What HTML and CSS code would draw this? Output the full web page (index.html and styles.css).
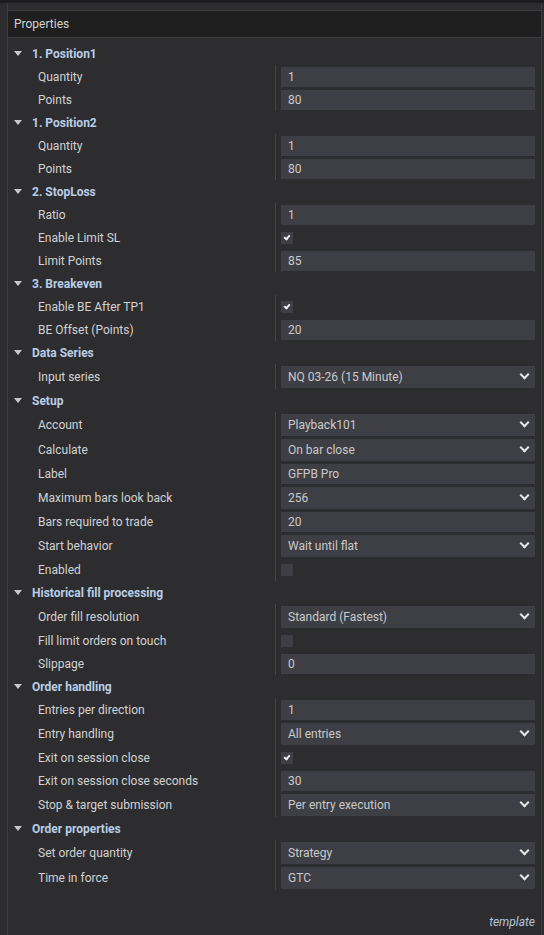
FILE: index.html
```html
<!DOCTYPE html>
<html>
<head>
  <title>Properties</title>
  <link rel="stylesheet" href="styles.css">
</head>
<body>
  <div class="panel">
    <div class="title">Properties</div>

    <div class="group">
      <div class="group-head"><span class="arrow"></span>1. Position1</div>
      <div class="row"><div class="label">Quantity</div><div class="value"><div class="input">1</div></div></div>
      <div class="row"><div class="label">Points</div><div class="value"><div class="input">80</div></div></div>
    </div>

    <div class="group">
      <div class="group-head"><span class="arrow"></span>1. Position2</div>
      <div class="row"><div class="label">Quantity</div><div class="value"><div class="input">1</div></div></div>
      <div class="row"><div class="label">Points</div><div class="value"><div class="input">80</div></div></div>
    </div>

    <div class="group">
      <div class="group-head"><span class="arrow"></span>2. StopLoss</div>
      <div class="row"><div class="label">Ratio</div><div class="value"><div class="input">1</div></div></div>
      <div class="row"><div class="label">Enable Limit SL</div><div class="value"><span class="check on"></span></div></div>
      <div class="row"><div class="label">Limit Points</div><div class="value"><div class="input">85</div></div></div>
    </div>

    <div class="group">
      <div class="group-head"><span class="arrow"></span>3. Breakeven</div>
      <div class="row"><div class="label">Enable BE After TP1</div><div class="value"><span class="check on"></span></div></div>
      <div class="row"><div class="label">BE Offset (Points)</div><div class="value"><div class="input">20</div></div></div>
    </div>

    <div class="group">
      <div class="group-head"><span class="arrow"></span>Data Series</div>
      <div class="row tall"><div class="label">Input series</div><div class="value"><div class="select">NQ 03-26 (15 Minute)<span class="chev"></span></div></div></div>
    </div>

    <div class="group">
      <div class="group-head"><span class="arrow"></span>Setup</div>
      <div class="row tall"><div class="label">Account</div><div class="value"><div class="select">Playback101<span class="chev"></span></div></div></div>
      <div class="row tall"><div class="label">Calculate</div><div class="value"><div class="select">On bar close<span class="chev"></span></div></div></div>
      <div class="row"><div class="label">Label</div><div class="value"><div class="input">GFPB Pro</div></div></div>
      <div class="row tall"><div class="label">Maximum bars look back</div><div class="value"><div class="select">256<span class="chev"></span></div></div></div>
      <div class="row"><div class="label">Bars required to trade</div><div class="value"><div class="input">20</div></div></div>
      <div class="row tall"><div class="label">Start behavior</div><div class="value"><div class="select">Wait until flat<span class="chev"></span></div></div></div>
      <div class="row"><div class="label">Enabled</div><div class="value"><span class="check"></span></div></div>
    </div>

    <div class="group">
      <div class="group-head"><span class="arrow"></span>Historical fill processing</div>
      <div class="row tall"><div class="label">Order fill resolution</div><div class="value"><div class="select">Standard (Fastest)<span class="chev"></span></div></div></div>
      <div class="row"><div class="label">Fill limit orders on touch</div><div class="value"><span class="check"></span></div></div>
      <div class="row"><div class="label">Slippage</div><div class="value"><div class="input">0</div></div></div>
    </div>

    <div class="group">
      <div class="group-head"><span class="arrow"></span>Order handling</div>
      <div class="row"><div class="label">Entries per direction</div><div class="value"><div class="input">1</div></div></div>
      <div class="row tall"><div class="label">Entry handling</div><div class="value"><div class="select">All entries<span class="chev"></span></div></div></div>
      <div class="row"><div class="label">Exit on session close</div><div class="value"><span class="check on"></span></div></div>
      <div class="row"><div class="label">Exit on session close seconds</div><div class="value"><div class="input">30</div></div></div>
      <div class="row tall"><div class="label">Stop &amp; target submission</div><div class="value"><div class="select">Per entry execution<span class="chev"></span></div></div></div>
    </div>

    <div class="group">
      <div class="group-head"><span class="arrow"></span>Order properties</div>
      <div class="row tall"><div class="label">Set order quantity</div><div class="value"><div class="select">Strategy<span class="chev"></span></div></div></div>
      <div class="row tall"><div class="label">Time in force</div><div class="value"><div class="select">GTC<span class="chev"></span></div></div></div>
    </div>

    <div class="footer">template</div>
  </div>
</body>
</html>
```

FILE: styles.css
```css
html, body {
  height: 100%;
}

body {
  margin: 0;
  background-color: #2d2d30;
  border-top: 3px solid #1c1c1d;
  box-sizing: border-box;
  font-family: Roboto, "Noto Sans", sans-serif;
  font-size: 12px;
  color: #d2d2d2;
}

.panel {
  margin-left: 7px;
  width: 535px;
  height: 100%;
  box-sizing: border-box;
  padding-top: 7px;
  border-left: 1px solid #3c3c3f;
  border-right: 1px solid #3c3c3f;
  display: flex;
  flex-direction: column;
}

.title {
  height: 26px;
  line-height: 27px;
  padding-left: 6px;
  background-color: #1f1f1f;
  border-top: 1px solid #3c3c3f;
  border-bottom: 1px solid #3c3c3f;
  margin-bottom: 4px;
}

.group-head {
  height: 23px;
  display: flex;
  align-items: center;
  padding: 1px 0 0 6px;
  box-sizing: border-box;
  font-weight: bold;
  color: #b9cde6;
}

.arrow {
  width: 0;
  height: 0;
  border-left: 4px solid transparent;
  border-right: 4px solid transparent;
  border-top: 5px solid #c8c8c8;
  margin: -1px 10px 0 0;
}

.row {
  height: 23px;
  display: flex;
}

.row.tall {
  height: 25px;
}

.label {
  width: 237px;
  padding: 1px 0 0 30px;
  display: flex;
  align-items: center;
}

.value {
  flex: 1;
  border-left: 1px solid #444447;
  padding: 2px 6px 0 5px;
}

.input,
.select {
  height: 20px;
  line-height: 21px;
  padding-left: 7px;
  background-color: #3e3e45;
  color: #cacaca;
}

.select {
  height: 22px;
  line-height: 23px;
  display: flex;
  justify-content: space-between;
  padding-right: 7px;
}

.chev {
  width: 5px;
  height: 5px;
  border-right: 2.5px solid #e6e6e6;
  border-bottom: 2.5px solid #e6e6e6;
  transform: rotate(45deg);
  margin-top: 5px;
}

.check {
  display: block;
  width: 12px;
  height: 12px;
  margin-top: 4px;
  background-color: #3e3e45;
  position: relative;
}

.check.on::after {
  content: "";
  position: absolute;
  left: 4px;
  top: 2px;
  width: 2px;
  height: 4px;
  border-right: 2px solid #f0f0f0;
  border-bottom: 2px solid #f0f0f0;
  transform: rotate(40deg);
}

.footer {
  margin-top: auto;
  padding: 0 6px 6px 0;
  text-align: right;
  font-style: italic;
  color: #b4c4da;
}
```
